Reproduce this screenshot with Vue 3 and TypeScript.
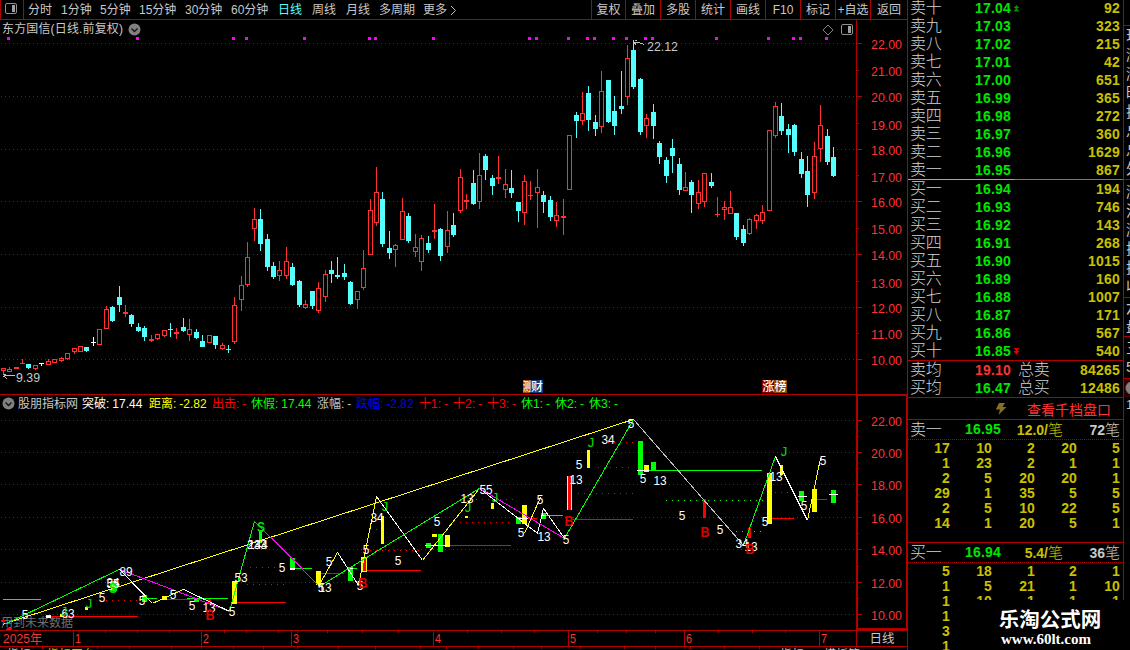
<script setup lang="ts">
type Kind = 'r' | 'c' | 'w'
// x centre, high, body top, body bottom, low, kind
type Candle = [number, number, number, number, number, Kind]

const candles: Candle[] = [
  [3, 368, 368, 371, 374, 'r'], [9, 367, 369, 372, 372, 'r'], [16, 367, 367, 369, 369, 'r'], [22, 359, 363, 364, 364, 'r'],
  [28, 364, 364, 368, 369, 'c'], [35, 365, 365, 369, 370, 'r'], [41, 363, 363, 364, 366, 'w'], [48, 359, 361, 365, 365, 'r'],
  [54, 359, 359, 363, 363, 'r'], [61, 357, 358, 361, 362, 'r'], [67, 353, 353, 359, 360, 'r'], [74, 348, 348, 352, 354, 'r'],
  [80, 346, 346, 352, 352, 'r'], [86, 347, 347, 351, 352, 'c'], [93, 337, 342, 343, 346, 'w'], [99, 329, 329, 345, 345, 'r'],
  [106, 306, 309, 329, 329, 'r'], [112, 306, 307, 321, 322, 'c'], [119, 286, 297, 305, 312, 'c'], [125, 305, 312, 314, 317, 'r'],
  [131, 314, 315, 324, 327, 'c'], [138, 323, 327, 331, 332, 'c'], [144, 326, 328, 337, 341, 'c'], [151, 335, 339, 341, 342, 'r'],
  [157, 334, 334, 339, 340, 'r'], [164, 330, 330, 336, 337, 'r'], [170, 323, 329, 330, 337, 'c'], [176, 328, 332, 334, 339, 'r'],
  [183, 318, 327, 331, 332, 'c'], [189, 319, 329, 335, 341, 'r'], [196, 329, 332, 338, 339, 'c'], [202, 335, 341, 347, 347, 'c'],
  [209, 335, 335, 343, 343, 'r'], [215, 336, 336, 345, 349, 'c'], [222, 343, 345, 349, 350, 'r'], [228, 345, 349, 350, 353, 'c'],
  [234, 297, 305, 342, 344, 'r'], [241, 276, 285, 300, 311, 'r'], [247, 242, 257, 285, 287, 'r'], [254, 208, 219, 229, 241, 'r'],
  [260, 209, 219, 244, 251, 'c'], [267, 234, 239, 267, 271, 'c'], [273, 262, 266, 277, 279, 'c'], [279, 261, 270, 276, 281, 'r'],
  [286, 247, 261, 276, 279, 'r'], [292, 263, 267, 285, 286, 'c'], [299, 280, 281, 305, 307, 'c'], [305, 300, 304, 308, 309, 'r'],
  [312, 291, 291, 306, 309, 'c'], [318, 282, 288, 311, 313, 'r'], [325, 270, 274, 297, 302, 'r'], [331, 261, 270, 274, 283, 'c'],
  [337, 257, 275, 277, 279, 'c'], [344, 264, 273, 277, 280, 'c'], [350, 281, 282, 304, 305, 'c'], [357, 291, 291, 300, 309, 'r'],
  [363, 250, 268, 288, 290, 'r'], [370, 199, 210, 255, 255, 'r'], [376, 167, 192, 223, 226, 'r'], [382, 192, 199, 244, 247, 'c'],
  [389, 231, 248, 253, 259, 'c'], [395, 244, 245, 250, 267, 'r'], [402, 198, 211, 240, 240, 'r'], [408, 213, 216, 241, 243, 'c'],
  [415, 234, 247, 252, 257, 'r'], [421, 235, 238, 262, 271, 'r'], [428, 236, 243, 250, 253, 'c'], [434, 204, 230, 232, 239, 'r'],
  [440, 228, 229, 256, 261, 'c'], [447, 211, 230, 247, 253, 'r'], [453, 213, 225, 235, 237, 'c'], [460, 169, 177, 211, 213, 'r'],
  [466, 194, 200, 202, 209, 'r'], [473, 170, 183, 204, 205, 'c'], [479, 153, 175, 202, 209, 'r'], [485, 154, 156, 170, 180, 'c'],
  [492, 175, 178, 186, 195, 'c'], [498, 156, 177, 179, 184, 'r'], [505, 169, 184, 190, 198, 'r'], [511, 170, 188, 193, 198, 'c'],
  [518, 202, 202, 211, 222, 'c'], [524, 175, 181, 213, 225, 'r'], [530, 181, 195, 196, 200, 'r'], [537, 169, 187, 193, 228, 'r'],
  [543, 191, 195, 202, 213, 'c'], [550, 196, 200, 217, 221, 'c'], [556, 202, 215, 221, 227, 'r'], [563, 199, 216, 218, 235, 'r'],
  [569, 135, 135, 190, 190, 'r'], [576, 112, 115, 121, 138, 'c'], [582, 92, 113, 121, 125, 'r'], [588, 86, 93, 120, 131, 'c'],
  [595, 115, 122, 129, 136, 'c'], [601, 71, 91, 127, 133, 'r'], [608, 80, 80, 122, 123, 'c'], [614, 96, 111, 126, 135, 'c'],
  [621, 71, 106, 109, 114, 'c'], [627, 45, 58, 97, 105, 'r'], [633, 40, 50, 87, 89, 'c'], [640, 78, 79, 132, 135, 'c'],
  [646, 114, 118, 126, 138, 'r'], [653, 104, 112, 126, 139, 'c'], [659, 141, 143, 157, 164, 'c'], [666, 157, 160, 176, 183, 'c'],
  [672, 139, 148, 156, 173, 'c'], [679, 158, 164, 190, 195, 'c'], [685, 172, 187, 191, 191, 'r'], [691, 180, 182, 195, 213, 'c'],
  [698, 180, 192, 204, 209, 'r'], [704, 173, 173, 202, 207, 'r'], [711, 173, 182, 186, 188, 'c'], [717, 197, 214, 215, 217, 'r'],
  [724, 201, 207, 210, 220, 'r'], [730, 191, 207, 214, 214, 'r'], [736, 213, 213, 237, 240, 'c'], [743, 225, 229, 243, 246, 'c'],
  [749, 218, 219, 234, 235, 'r'], [756, 214, 215, 221, 229, 'r'], [762, 205, 212, 221, 224, 'r'], [769, 130, 130, 211, 211, 'r'],
  [775, 102, 106, 136, 138, 'r'], [781, 103, 116, 131, 135, 'c'], [788, 124, 129, 135, 153, 'c'], [794, 124, 125, 152, 156, 'c'],
  [801, 152, 159, 174, 178, 'c'], [807, 156, 171, 195, 207, 'c'], [814, 142, 156, 193, 199, 'r'], [820, 105, 125, 149, 162, 'r'],
  [827, 129, 136, 162, 165, 'c'], [833, 147, 157, 176, 177, 'c'],
]

const periods = ['分时', '1分钟', '5分钟', '15分钟', '30分钟', '60分钟', '日线', '周线', '月线', '多周期', '更多']
const actions = ['复权', '叠加', '多股', '统计', '画线', 'F10', '标记', '+自选', '返回']
const eventDots = [7, 136, 232, 245, 303, 368, 374, 432, 528, 535, 567, 586, 593, 612, 625, 644, 651, 715, 767, 792, 799, 825]
const mainGrid = [43, 96, 149, 201, 254, 307, 359]
const mainLabels: [string, number][] = [
  ['22.00', 44], ['21.00', 71], ['20.00', 97], ['19.00', 125], ['18.00', 150], ['17.00', 177], ['16.00', 202],
  ['15.00', 229], ['14.00', 255], ['13.00', 283], ['12.00', 308], ['11.00', 334], ['10.00', 360],
]
const minorTicks = [70, 123, 175, 228, 281, 333]

const subGrid = [420, 452, 484, 517, 549, 582, 614]
const subLabels = ['22.00', '20.00', '18.00', '16.00', '14.00', '12.00', '10.00']
const subMinor = [436, 468, 501, 533, 566, 598]

const Y = '#ffff00', G = '#00ff00', M = '#ff00ff', W = '#ffffff', R = '#ff0000', S = '#c0c0c0'
const indicators: { label: string; value: string; color: string }[] = [
  { label: '突破:', value: '17.44', color: W },
  { label: '距离:', value: '-2.82', color: Y },
  { label: '出击:', value: '-', color: R },
  { label: '休假:', value: '17.44', color: G },
  { label: '涨幅:', value: '-', color: S },
  { label: '跌幅:', value: '-2.82', color: '#0000ff' },
  { label: '十1:', value: '-', color: R },
  { label: '十2:', value: '-', color: R },
  { label: '十3:', value: '-', color: R },
  { label: '休1:', value: '-', color: G },
  { label: '休2:', value: '-', color: G },
  { label: '休3:', value: '-', color: G },
]

const trend: [string, string][] = [
  [Y, '2,624 633,419'], [G, '4,624 119,569'], [M, '119,569 229,611'], [W, '119,569 152,603'], [Y, '152,603 183,589'],
  [W, '183,589 229,611'], [G, '229,611 254,521'], [M, '254,521 286,552.6 319,586'], [Y, '318,586 337,552'], [W, '337,552 358,585'],
  [Y, '358,585 376,496'], [W, '376,496 422,560'], [Y, '422,560 479,488'], [G, '319,586 479,488'],
  [W, '479,488 537,533 543,508 564,538'], [M, '479,488 564,538'], [Y, '524,533 540,497'], [G, '564,538 633,419'], [S, '633,419 743,545'],
  [G, '743,545 775,456'], [W, '775,456 807,520'], [Y, '807,520 820,458'],
]
// colour, x1, x2, y
const levels: [string, number, number, number][] = [
  [G, 3, 41, 599], [G, 143, 157, 598], [G, 187, 228, 598], [G, 292, 312, 568], [G, 348, 357, 568], [G, 544, 563, 515],
  [G, 645, 762, 470], [R, 45, 138, 616], [R, 160, 190, 599], [R, 236, 286, 602], [R, 318, 344, 573], [R, 365, 421, 570],
  [R, 450, 511, 545], [R, 523, 537, 518], [R, 573, 633, 519], [R, 768, 794, 518], [R, 812, 827, 499],
]
const dotted: [string, number, number, number][] = [
  [R, 100, 140, 600], [R, 250, 275, 567], [R, 247, 288, 584], [R, 364, 422, 550], [R, 470, 513, 499], [R, 460, 512, 522],
  [R, 370, 378, 529], [R, 598, 634, 467], [R, 578, 634, 493], [R, 602, 634, 442], [G, 666, 763, 500], [G, 736, 763, 531],
  [R, 775, 798, 492],
]
// colour, x, y, width, height
const bars: [string, number, number, number, number][] = [
  [Y, 46, 615, 5, 3], [W, 46, 616, 5, 2], [Y, 60, 614, 3, 3], [Y, 85, 607, 3, 3], [G, 111, 581, 6, 10], [G, 142, 595, 5, 7],
  [Y, 162, 596, 5, 4], [G, 194, 599, 5, 3], [R, 208, 599, 3, 5], [Y, 232, 581, 5, 23], [G, 259, 530, 3, 13],
  [G, 290, 558, 5, 12], [W, 290, 568, 5, 2], [Y, 316, 571, 5, 14], [W, 316, 573, 5, 1], [G, 348, 567, 5, 14], [W, 347, 568, 6, 1],
  [Y, 361, 557, 6, 15], [R, 363, 558, 3, 13], [Y, 381, 516, 3, 28], [G, 426, 543, 5, 5], [Y, 432, 534, 5, 3],
  [G, 438, 534, 5, 18], [Y, 445, 535, 5, 12], [W, 425, 545, 25, 1], [Y, 465, 516, 3, 2], [Y, 491, 503, 3, 6],
  [G, 516, 517, 5, 7], [Y, 522, 505, 5, 19], [W, 517, 518, 11, 1], [G, 541, 513, 5, 6], [W, 541, 515, 5, 1], [Y, 567, 476, 5, 34],
  [R, 568, 476, 3, 34], [Y, 587, 450, 3, 18], [G, 638, 441, 5, 34], [Y, 644, 465, 5, 7], [G, 651, 462, 5, 8],
  [W, 637, 470, 12, 1], [R, 703, 499, 3, 19], [R, 748, 528, 3, 10], [Y, 767, 473, 5, 51], [Y, 780, 465, 3, 10],
  [G, 799, 491, 5, 10], [W, 798, 496, 9, 1], [Y, 812, 489, 5, 23], [W, 812, 499, 5, 1], [G, 831, 490, 5, 13], [W, 829, 494, 9, 1],
]
const notes: [string, number, number][] = [
  ['5', 25, 614], ['63', 68, 613], ['5', 102, 597], ['55', 113, 583], ['34', 113, 582], ['89', 126, 571], ['5', 142, 600],
  ['5', 173, 594], ['5', 192, 605], ['13', 209, 607], ['5', 232, 611], ['53', 241, 577], ['233', 257, 544], ['144', 258, 544],
  ['5', 282, 567], ['5', 329, 561], ['13', 325, 587], ['5', 321, 587], ['5', 360, 585], ['5', 366, 549], ['34', 377, 517],
  ['5', 398, 560], ['5', 437, 521], ['13', 467, 498], ['55', 486, 489], ['5', 521, 532], ['5', 540, 499], ['13', 544, 536],
  ['5', 566, 539], ['5', 579, 464], ['13', 576, 479], ['34', 608, 439], ['5', 631, 423], ['5', 643, 478], ['13', 660, 480],
  ['5', 682, 515], ['5', 720, 529], ['34', 742, 543], ['13', 751, 546], ['5', 765, 521], ['13', 776, 476], ['5', 804, 505],
  ['5', 823, 460],
]
const jumps: [number, number][] = [[64, 612], [89, 604], [385, 507], [468, 508], [495, 498], [591, 443], [784, 452]]
const buys: [number, number][] = [[210, 614], [363, 582], [569, 520], [705, 531], [750, 548]]
const sells: [number, number][] = [[113, 588], [261, 527]]

const months: [string, number][] = [['1', 73], ['2', 201], ['3', 291], ['4', 433], ['5', 568], ['6', 684], ['7', 819]]
const weekTicks = [105, 137, 169, 224, 246, 278, 297, 327, 362, 398, 467, 501, 534, 597, 626, 655, 718, 752, 785]
const lowerTicks = [42, 97, 129, 171, 201, 233, 263, 297, 338, 375, 420, 446, 478, 513, 541, 580, 624, 655, 690, 724, 759, 795, 830]

const asks: [string, string, string][] = [
  ['卖十', '17.04', '92'], ['卖九', '17.03', '323'], ['卖八', '17.02', '215'], ['卖七', '17.01', '42'], ['卖六', '17.00', '651'],
  ['卖五', '16.99', '365'], ['卖四', '16.98', '272'], ['卖三', '16.97', '360'], ['卖二', '16.96', '1629'], ['卖一', '16.95', '867'],
]
const bids: [string, string, string][] = [
  ['买一', '16.94', '194'], ['买二', '16.93', '746'], ['买三', '16.92', '143'], ['买四', '16.91', '268'], ['买五', '16.90', '1015'],
  ['买六', '16.89', '160'], ['买七', '16.88', '1007'], ['买八', '16.87', '171'], ['买九', '16.86', '567'], ['买十', '16.85', '540'],
]
const askQueue = [17, 10, 2, 20, 5, 1, 23, 2, 1, 1, 2, 5, 20, 20, 1, 29, 1, 35, 5, 5, 2, 5, 10, 22, 5, 14, 1, 20, 5, 1]
const bidQueue = [5, 18, 1, 2, 1, 1, 5, 21, 1, 10, 1, 10, 1, 1, 1, 1, '', '', '', '', 3, '', '', '', '', 1, '', '', '', '']

const strip: { lines: string[]; kind: string }[] = [
  { lines: ['现', '涨', '涨', '昨', '换', '总', '总', '外'], kind: 'a' },
  { lines: ['涨', '流', '涨', '换', '换', '收'], kind: 'b' },
  { lines: ['六', '盘'], kind: 'c' },
  { lines: ['三', '5'], kind: 'd' },
]

const tone = (k: Kind) => (k === 'r' ? '#ff3232' : k === 'c' ? '#54ffff' : '#ffffff')
</script>

<template>
  <div class="app">
    <main class="left">
      <header class="toolbar">
        <div class="dock">
          <svg width="12" height="12"><rect x=".5" y=".5" width="11" height="10" rx="1.5" fill="none" stroke="#909090" /><rect x="7" y="2" width="3" height="7" fill="#a0a0a0" /></svg>
        </div>
        <nav class="periods">
          <span v-for="p in periods" :key="p" :class="{ on: p === '日线' }">{{ p }}</span>
          <svg width="7" height="11"><path d="M1 1 L5.5 5.5 L1 10" fill="none" stroke="#c0c0c0" /></svg>
        </nav>
        <nav class="actions"><span v-for="a in actions" :key="a">{{ a }}</span></nav>
      </header>

      <div class="caption">
        <div class="caption-main">
          <span>东方国信(日线.前复权)</span>
          <svg class="chev" width="13" height="13"><circle cx="6.5" cy="6.5" r="6" fill="#808080" /><path d="M3.5 5.5 L6.5 8.5 L9.5 5.5" fill="none" stroke="#101010" stroke-width="1.3" /></svg>
          <svg class="tools" width="34" height="12">
            <path d="M1 6 L6 1 L11 6 L6 11 Z" fill="none" stroke="#808080" />
            <rect x="19.5" y=".5" width="11" height="10" rx="1.5" fill="none" stroke="#909090" /><rect x="26" y="2" width="3" height="7" fill="#a0a0a0" />
          </svg>
        </div>
      </div>

      <svg class="chart" width="908" height="357" viewBox="0 37 908 357">
        <g shape-rendering="crispEdges">
          <line v-for="y in mainGrid" :key="y" x1="1" x2="856" :y1="y + 0.5" :y2="y + 0.5" stroke="#b00000" stroke-dasharray="1 3" />
          <rect x="856" y="37" width="1" height="357" fill="#b00000" />
          <rect x="907" y="37" width="1" height="357" fill="#b00000" />
          <rect v-for="y in mainGrid" :key="'t' + y" x="857" :y="y" width="5" height="1" fill="#b00000" />
          <rect v-for="y in minorTicks" :key="'m' + y" x="857" :y="y" width="2" height="1" fill="#b00000" />
          <rect v-for="x in eventDots" :key="'e' + x" :x="x" y="37" width="3" height="3" fill="#ff00ff" />
          <g v-for="c in candles" :key="'c' + c[0]" :fill="tone(c[5])">
            <rect :x="c[0]" :y="c[1]" width="1" :height="c[4] - c[1]" />
            <rect :x="c[0] - 2" :y="c[2]" width="5" :height="c[3] - c[2]" />
            <rect v-if="c[5] === 'r' && c[3] - c[2] > 2" :x="c[0] - 1" :y="c[2] + 1" width="3" :height="c[3] - c[2] - 2" fill="#000" />
          </g>
          <path d="M634 42.5 H637 M635 40.5 H637 M637 42 L644.5 44.5 M634 42 L636 45" stroke="#c0c0c0" fill="none" />
          <path d="M4 375.5 H15 M3 374.5 H6 M4 376 L7 379 M3 376.5 H5" stroke="#c0c0c0" fill="none" />
        </g>
        <g class="num" fill="#ff3232">
          <text v-for="l in mainLabels" :key="l[0]" x="871" :y="l[1] + 5" textLength="31" lengthAdjust="spacingAndGlyphs">{{ l[0] }}</text>
        </g>
        <g class="num" fill="#c8c8c8">
          <text x="647" y="50.5" textLength="31" lengthAdjust="spacingAndGlyphs">22.12</text>
          <text x="16" y="381.5" textLength="24" lengthAdjust="spacingAndGlyphs">9.39</text>
        </g>
        <rect x="523" y="380" width="7" height="13" fill="#b04800" /><rect x="530" y="380" width="13" height="13" fill="#0a3878" />
        <rect x="762" y="380" width="12" height="13" fill="#800000" /><rect x="774" y="380" width="13" height="13" fill="#884400" />
        <g class="badge"><text x="523" y="391" textLength="8" lengthAdjust="spacingAndGlyphs">测</text><text x="531" y="391">财</text><text x="762.5" y="391">涨榜</text></g>
      </svg>

      <section class="study">
        <div class="study-main">
          <div class="legend">
            <svg width="13" height="13"><circle cx="6.5" cy="6.5" r="6" fill="#808080" /><path d="M3.5 5.5 L6.5 8.5 L9.5 5.5" fill="none" stroke="#101010" stroke-width="1.3" /></svg>
            <span class="name">股朋指标网</span>
            <span v-for="i in indicators" :key="i.label" class="ind" :style="{ color: i.color }"><span>{{ i.label }}</span><b>{{ i.value }}</b></span>
          </div>
          <svg class="chart" width="856" height="219" viewBox="0 411 856 219">
            <text x="1" y="627" fill="#707070" font-size="12">用到未来数据</text>
            <g shape-rendering="crispEdges">
              <line v-for="y in subGrid" :key="y" x1="1" x2="856" :y1="y + 0.5" :y2="y + 0.5" stroke="#b00000" stroke-dasharray="1 3" />
              <line v-for="(d, i) in dotted" :key="'d' + i" :x1="d[1]" :x2="d[2]" :y1="d[3] + 0.5" :y2="d[3] + 0.5" :stroke="d[0]" stroke-dasharray="1 5" />
              <line v-for="(l, i) in levels" :key="'l' + i" :x1="l[1]" :x2="l[2]" :y1="l[3] + 0.5" :y2="l[3] + 0.5" :stroke="l[0]" />
              <rect v-for="(b, i) in bars" :key="'b' + i" :x="b[1]" :y="b[2]" :width="b[3]" :height="b[4]" :fill="b[0]" />
              <g transform="translate(.5 .4)"><polyline v-for="(t, i) in trend" :key="'p' + i" :points="t[1]" fill="none" :stroke="t[0]" /></g>
              <path d="M1 620 H5 V622 H1 Z M7 628 H12 V630 H6 Z" fill="#ff0000" />
            </g>
            <g class="note">
              <text v-for="(n, i) in notes" :key="i" :x="n[1]" :y="n[2] + 4.5" fill="#fff" :textLength="n[0].length * 6.6" lengthAdjust="spacingAndGlyphs">{{ n[0] }}</text>
              <text v-for="(j, i) in jumps" :key="'j' + i" :x="j[0]" :y="j[1] + 4" fill="#00e000">J</text>
            </g>
            <g class="mark">
              <text v-for="(b, i) in buys" :key="'B' + i" :x="b[0]" :y="b[1] + 6" fill="#e00000" textLength="9" lengthAdjust="spacingAndGlyphs">B</text>
              <text v-for="(s, i) in sells" :key="'S' + i" :x="s[0]" :y="s[1] + 5" fill="#00e000" textLength="8" lengthAdjust="spacingAndGlyphs">S</text>
            </g>
          </svg>
        </div>
        <div class="study-axis">
          <svg width="48" height="232" viewBox="858 396 48 232">
            <g shape-rendering="crispEdges" fill="#b00000">
              <rect v-for="y in subGrid" :key="y" x="858" :y="y" width="4" height="1" />
              <rect v-for="y in subMinor" :key="'m' + y" x="858" :y="y" width="1" height="1" />
            </g>
            <g class="num" fill="#ff3232">
              <text v-for="(l, i) in subLabels" :key="l" x="871" :y="subGrid[i] + 5.5" textLength="31" lengthAdjust="spacingAndGlyphs">{{ l }}</text>
            </g>
          </svg>
        </div>
      </section>

      <div class="timeline">
        <svg class="chart" width="856" height="16" viewBox="0 631 856 16">
          <g shape-rendering="crispEdges" fill="#b00000">
            <rect v-for="m in months" :key="m[0]" :x="m[1]" y="631" width="1" height="15" />
            <rect v-for="w in weekTicks" :key="w" :x="w" y="631" width="1" height="2" />
          </g>
          <g fill="#ff3232" font-size="13">
            <text x="3" y="643" textLength="39" lengthAdjust="spacingAndGlyphs">2025年</text>
            <text v-for="m in months" :key="m[0]" :x="m[1] + 2" y="643" textLength="6" lengthAdjust="spacingAndGlyphs">{{ m[0] }}</text>
          </g>
        </svg>
        <div class="unit">日线</div>
      </div>
      <svg class="chart" width="908" height="3" viewBox="0 647 908 3">
        <rect v-for="t in lowerTicks" :key="t" :x="t" y="647" width="1" height="2" fill="#b00000" />
        <g font-size="12" fill="#c0c0c0"><text x="7" y="659">指标</text><text x="47" y="659" fill="#c8c000">指标平台</text><text x="780" y="659">指标</text><text x="824" y="659">模板管</text></g>
        <rect x="907" y="647" width="1" height="3" fill="#b00000" />
      </svg>
    </main>

    <aside class="book">
      <div class="quotes">
        <div v-for="(q, i) in asks" :key="q[0]" class="q">
          <span class="side">{{ q[0] }}</span><span class="price">{{ q[1] }}</span>
          <svg width="12" height="9"><path v-if="i === 0" d="M5.5 1 L8.5 4 H6.5 V5 L8.5 7.5 H2.5 L4.5 5 V4 H2.5 Z" fill="#009000" /></svg>
          <span class="vol">{{ q[2] }}</span>
        </div>
      </div>
      <div class="split"><i></i><i></i></div>
      <div class="quotes bids">
        <div v-for="(q, i) in bids" :key="q[0]" class="q">
          <span class="side">{{ q[0] }}</span><span class="price">{{ q[1] }}</span>
          <svg width="12" height="9"><path v-if="i === 9" d="M2.5 1 H8.5 L6.5 3 V4 H8.5 L5.5 8 L2.5 4 H4.5 V3 Z" fill="#e00000" /></svg>
          <span class="vol">{{ q[2] }}</span>
        </div>
      </div>
      <div class="totals">
        <div class="q"><span class="side">卖均</span><span class="price up">19.10</span><span class="side sum">总卖</span><span class="vol">84265</span></div>
        <div class="q"><span class="side">买均</span><span class="price">16.47</span><span class="side sum">总买</span><span class="vol">12486</span></div>
      </div>
      <div class="depth">
        <svg width="12" height="14"><path d="M4 1 H10 L7.5 5 H11.5 L3.5 13 L5 7.5 H.8 Z" fill="#807028" /></svg>
        <span>查看千档盘口</span>
      </div>
      <section class="queue">
        <div class="qh"><span class="side">卖一</span><span class="price">16.95</span><span class="avg">12.0/<em>笔</em></span><span class="cnt">72<em>笔</em></span></div>
        <div class="cells"><span v-for="(n, i) in askQueue" :key="i">{{ n }}</span></div>
      </section>
      <section class="queue last">
        <div class="qh"><span class="side">买一</span><span class="price">16.94</span><span class="avg">5.4/<em>笔</em></span><span class="cnt">36<em>笔</em></span></div>
        <div class="cells"><span v-for="(n, i) in bidQueue" :key="i">{{ n }}</span></div>
      </section>
    </aside>

    <aside class="strip">
      <div v-for="s in strip" :key="s.kind" :class="['blk', s.kind]"><span v-for="(t, i) in s.lines" :key="i">{{ t }}</span></div>
      <div class="knob"><svg width="7" height="26"><rect width="7" height="18" fill="#300000" /><circle cx="8" cy="9" r="6.5" fill="#808080" /></svg></div>
      <div class="one">1</div>
    </aside>

    <div class="watermark"><strong>乐淘公式网</strong><span>www.60lt.com</span></div>
  </div>
</template>

<style scoped>
.app { position: relative; display: flex; width: 1130px; height: 650px; overflow: hidden; background: #000; color: #c8c8c8; font-family: "Liberation Sans", "Noto Sans CJK SC", sans-serif; font-size: 12px; font-weight: 400; white-space: nowrap; }
.left { width: 908px; flex: none; }
.chart { display: block; overflow: hidden; }
svg { flex: none; }
.toolbar { display: flex; height: 19px; border-bottom: 1px solid #b00000; }
.dock { width: 22px; border-left: 1px solid #b00000; border-right: 1px solid #b00000; display: flex; align-items: center; box-sizing: content-box; }
.dock svg { margin: -2px 0 0 4px; }
.periods { display: grid; grid-template-columns: 33px 39px 39px 46px 46px 47px 34px 34px 33px 44px 27px 20px; padding-left: 4px; width: 563px; height: 19px; align-items: center; line-height: 19px; }
.periods span { padding-top: 1px; }
.periods .on { color: #54ffff; }
.actions { display: grid; grid-template-columns: 34px 35px 35px 35px 35px 35px 35px 35px 37px; height: 19px; border-right: 1px solid #b00000; line-height: 20px; text-align: center; }
.actions span { border-left: 1px solid #b00000; height: 19px; }
.caption { height: 17px; border-right: 1px solid #b00000; }
.caption-main { display: flex; align-items: center; width: 856px; height: 17px; border-right: 1px solid #b00000; }
.caption-main span { padding: 1px 0 0 2px; width: 124px; letter-spacing: .15px; line-height: 19px; }
.chev { margin: 2px 0 0 2px; }
.tools { margin: 2px 0 0 auto; }
.num { font-size: 13.5px; }
.badge { font-size: 12px; fill: #fff; font-weight: 500; }
.study { display: flex; height: 236px; }
.study-main { width: 856px; border-top: 1px solid #b00000; height: 235px; overflow: hidden; }
.study-axis { width: 48px; height: 232px; border: 2px solid #b00000; }
.legend { height: 16px; display: grid; grid-template-columns: 16px 64px 67px 63px 39px 66px 39px 63px 34px 34px 34px 34px 34px 34px; align-items: start; padding-left: 2px; line-height: 18px; }
.legend svg { margin: 2px 0 0 -.5px; }
.legend .ind { display: flex; gap: 3px; }
.legend b { font-weight: 400; }
.note { font-size: 13px; text-anchor: middle; }
.mark { font-size: 15.5px; text-anchor: middle; font-weight: 700; font-family: "Liberation Sans", sans-serif; }
.timeline { display: flex; height: 15px; border-top: 1px solid #b00000; border-bottom: 1px solid #b00000; }
.unit { width: 50px; border-left: 1px solid #b00000; border-right: 1px solid #b00000; text-align: center; line-height: 16px; font-size: 12.5px; }
.book { width: 215px; flex: none; height: 650px; overflow: hidden; }
.quotes { margin-top: -1px; height: 180px; }
.q { display: flex; align-items: center; height: 18px; line-height: 18px; }
.side { font-size: 16px; font-weight: 300; color: #d4d4d4; width: 53px; padding-left: 2px; letter-spacing: -.2px; }
.price { width: 48px; text-align: right; color: #00e600; font-weight: 700; font-size: 14px; letter-spacing: .2px; }
.price.up { color: #ff3232; }
.vol { margin-left: auto; padding-right: 3px; color: #c8c000; font-weight: 700; font-size: 14px; letter-spacing: .2px; }
.split { display: flex; height: 1px; }
.split i { background: #e0a040; width: 106px; }
.split i + i { background: #4080d0; width: 109px; }
.quotes.bids { margin-top: 0; }
.totals { border-top: 1px solid #b00000; height: 36px; }
.side.sum { width: 34px; padding-left: 7px; }
.depth { height: 21px; border-top: 1px solid #b00000; display: flex; align-items: center; font-size: 14px; color: #ff3232; }
.depth svg { margin: 0 20px 0 87px; }
.queue { border-top: 1px solid #b00000; height: 122px; }
.qh { height: 19px; line-height: 19px; display: grid; grid-template-columns: 45px 48px 62px 57px; border-bottom: 1px dotted #b00000; font-weight: 700; font-size: 14px; text-align: right; }
.qh .side { text-align: left; width: auto; }
.qh em { font-style: normal; font-weight: 300; font-size: 15px; }
.qh .price { width: auto; }
.avg { color: #c8c000; }
.cells { display: grid; grid-template-columns: 42px 42px 43px 42px 43px; grid-auto-rows: 15px; line-height: 15px; padding-top: 1px; text-align: right; color: #c8c000; font-weight: 700; font-size: 14px; letter-spacing: .1px; }
.strip { width: 7px; height: 600px; border-left: 1px solid #b00000; overflow: hidden; padding-top: 25px; box-sizing: border-box; }
.blk { border-top: 1px solid #b00000; display: flex; flex-direction: column; font-size: 15px; padding-left: 2px; box-sizing: border-box; }
.blk span { height: 19px; line-height: 19px; }
.blk.a { height: 154px; }
.blk.b { height: 118px; padding-top: 2px; }
.blk.c { height: 39px; }
.blk.d { height: 42px; padding-top: 1px; }
.knob { border-top: 1px solid #b00000; height: 18px; overflow: hidden; }
.one { padding-left: 2px; line-height: 16px; font-size: 13px; }
.watermark { position: absolute; left: 970px; top: 600px; width: 160px; height: 50px; background: #000; color: #fff; display: flex; flex-direction: column; align-items: center; }
.watermark strong { font: 700 20.5px/36px "Noto Sans CJK SC", sans-serif; }
.watermark span { font: 700 15px/16px "Liberation Serif", serif; margin-top: -5px; margin-right: 8px; }
</style>

<style>
html, body { margin: 0; background: #000; overflow: hidden; }
</style>
